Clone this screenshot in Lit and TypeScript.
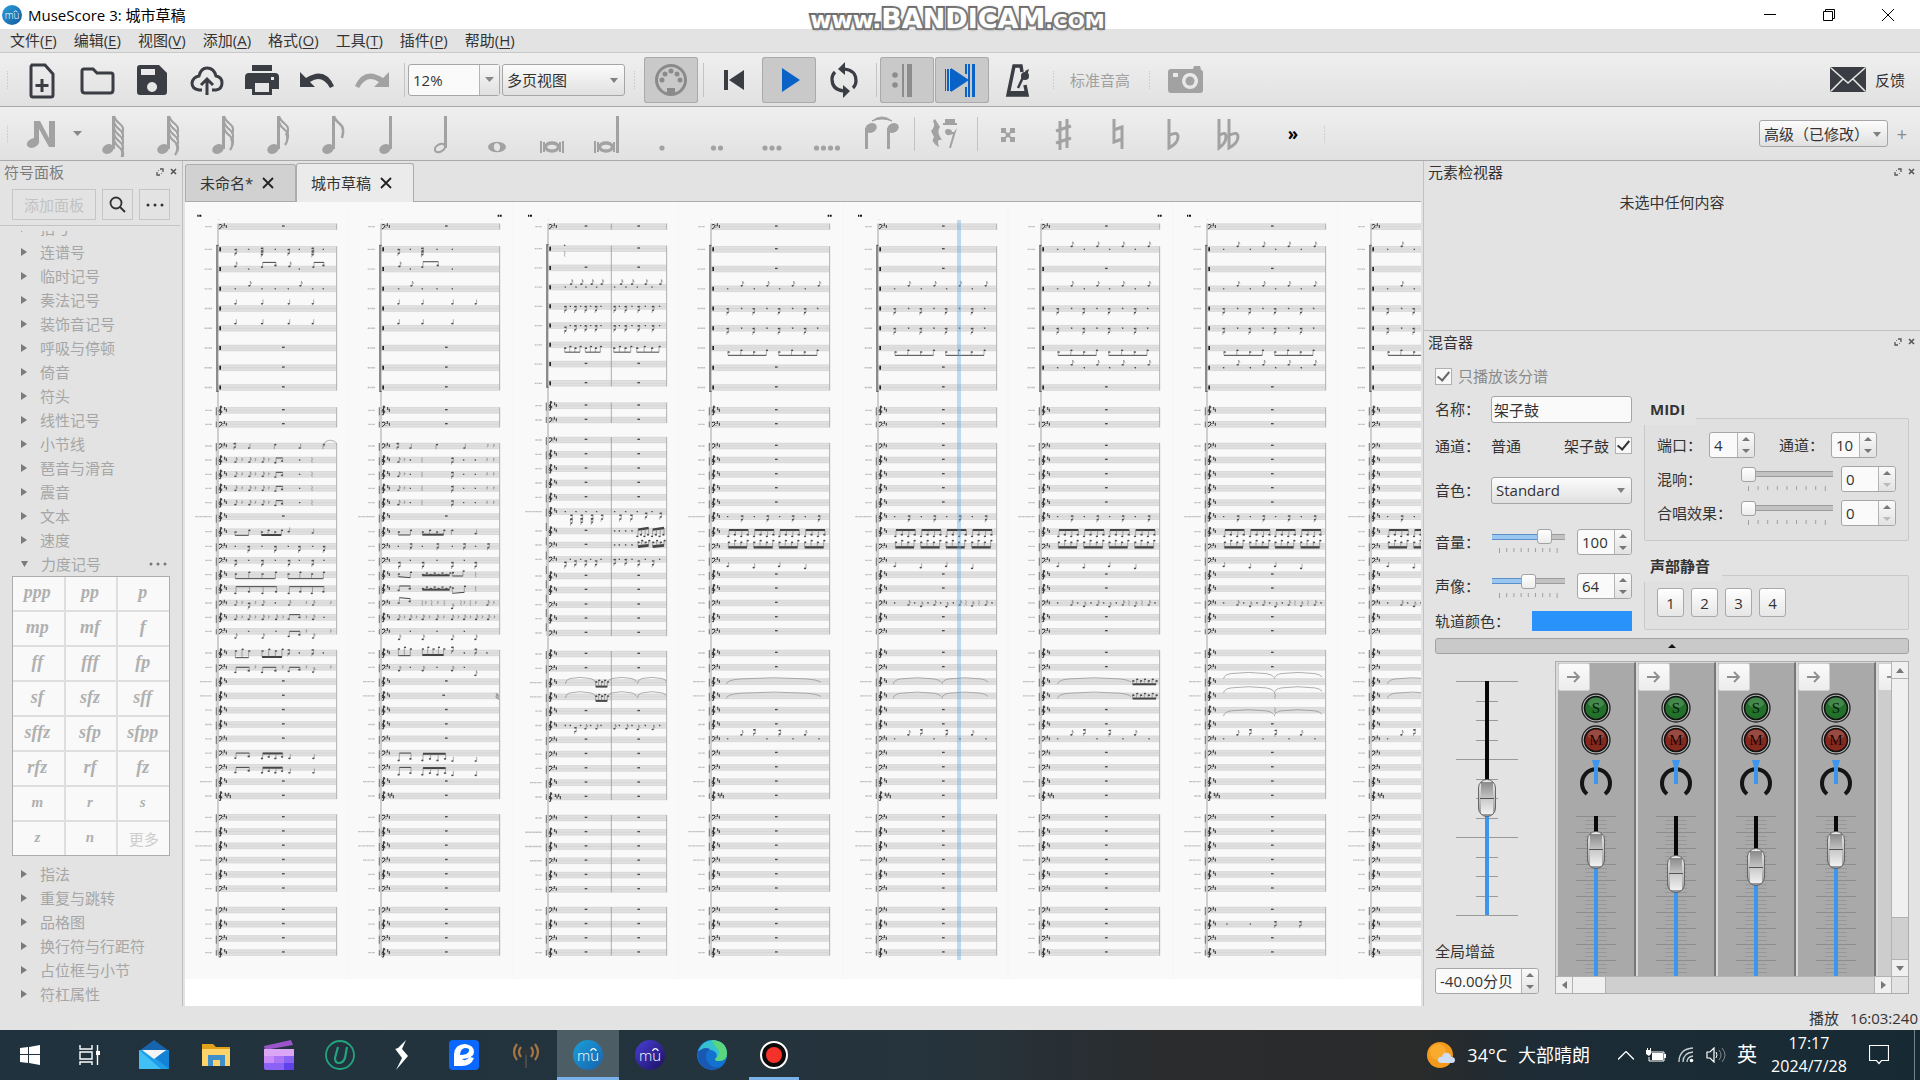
import { LitElement, html, svg, css } from "lit";
import { customElement, property } from "lit/decorators.js";

const DARK = "#3b3d44";
const GREY = "#a2a2a2";
const BLUE = "#0b62c6";

const icon = (w: number, h: number, body: unknown) =>
  html`<svg width=${w} height=${h} viewBox="0 0 ${w} ${h}" aria-hidden="true">${body}</svg>`;

/* ---------- toolbar icons, all on a 54 x 46 field ---------- */
const fileIcons: [string, unknown][] = [
  ["新建", svg`<path d="M16 8h14l8 9v21q0 2-2 2H18q-2 0-2-2V10q0-2 2-2" fill="none" stroke=${DARK} stroke-width="3"/><path d="M27 22v13M20.500 28.500h13" stroke=${DARK} stroke-width="3"/>`],
  ["打开", svg`<path d="M12 33V14q0-2 2-2h9l4 4h14q2 0 2 2v15q0 3-3 3H15q-3 0-3-3z" fill="none" stroke=${DARK} stroke-width="3"/>`],
  ["保存", svg`<path fill-rule="evenodd" d="M15 8h19l8 8v19q0 3-3 3H15q-3 0-3-3V11q0-3 3-3zm1 4v6h14v-6zM27 25a5 5 0 1 0 .1 0z" fill=${DARK}/>`],
  ["云端保存", svg`<path d="M22 33h-3q-7-1-7-7 1-6 7-7 2-8 8-8 7 0 9 8 6 1 6 7 0 6-6 7h-4M27 38V23M21 28l6-6 6 6" fill="none" stroke=${DARK} stroke-width="3"/>`],
  ["打印", svg`<path fill-rule="evenodd" d="M17 8h20v6H17zM14 16h26q4 0 4 4v12h-7v6H17v-6h-7V20q0-4 4-4zm6 10v9h14v-9zm19-6h-3v3h3z" fill=${DARK}/>`],
  ["撤销", svg`<path d="M10 15v15h15l-5-5q12-8 20 6l4-2Q35 9 16 21z" fill=${DARK}/>`],
  ["重做", svg`<path d="M44 15v15H29l5-5q-12-8-20 6l-4-2Q19 9 38 21z" fill=${GREY}/>`],
];

const midiIcon = svg`<circle cx="27" cy="23" r="14.500" fill="none" stroke="#8a8a8a" stroke-width="3"/><g fill="#8a8a8a"><circle cx="18" cy="23" r="2.500"/><circle cx="36" cy="23" r="2.500"/><circle cx="21" cy="17" r="2.500"/><circle cx="33" cy="17" r="2.500"/><circle cx="27" cy="14" r="2.500"/><path d="M23 31h8v6h-8z"/></g>`;
const rewindIcon = svg`<path d="M17 13h4v20h-4zM37 13v20L22 23z" fill=${DARK}/>`;
const playIcon = svg`<path d="M20 11l18 12-18 12z" fill=${BLUE}/>`;
const loopIcon = svg`<g fill="none" stroke=${DARK} stroke-width="3.200"><path d="M27 12q12 1 12 12 0 4-3 7M27 34q-12-1-12-12 0-4 3-7"/></g><path d="M28 5v13l-7-6zM26 41V28l7 6z" fill=${DARK}/>`;
const repeatIcon = svg`<g fill="#8c8c8c"><circle cx="15" cy="18" r="2.800"/><circle cx="15" cy="28" r="2.800"/><path d="M22 7h2v33h-2zM27 7h5v33h-5z"/></g>`;
const panIcon = svg`<path d="M10 12h1v22h-1zM12 12h2v22h-2zM15 12h1v22h-1zM16 11l18 12-18 12zM30 7h2v10h-2zM30 30h2v10h-2zM33 7h2v33h-2zM37 7h3v33h-3z" fill=${BLUE}/>`;
const metroIcon = svg`<path d="M32 15l-1-6h-7l-6 29h19l-2-10" fill="none" stroke=${DARK} stroke-width="3.500"/><path d="M17 34h21v5H17z" fill=${DARK}/><path d="M28 31l7-15" stroke=${DARK} stroke-width="2.500"/><circle cx="35" cy="19" r="4" fill=${DARK}/><path d="M35 14l4-2-2 7z" fill=${DARK}/>`;
const cameraIcon = svg`<path fill-rule="evenodd" d="M12 12h22l1-3h6l1 4q2 0 2 3v17q0 3-3 3H12q-3 0-3-3V15q0-3 3-3zm2 4v4h5v-4zm17 0a8 8 0 1 0 .1 0z" fill=${GREY}/><circle cx="31" cy="24" r="4.500" fill=${GREY}/>`;
const mailIcon = svg`<rect width="36" height="25" rx="2" fill=${DARK}/><path d="M1 1l17 15L35 1M1 24l12-12M35 24L23 12" fill="none" stroke="#e8e8e8" stroke-width="1.600"/>`;

const head = (x: number, y: number) => svg`<ellipse cx=${x} cy=${y} rx="6" ry="4.600" transform="rotate(-25 ${x} ${y})" fill=${GREY}/>`;
const flagged = (n: number) => svg`${head(23, 38)}<path d="M27 5h3v33h-3z" fill=${GREY}/>${Array.from({ length: n }, (_, i) => svg`<path d="M29 ${5 + i * 6}q1 4 6 8 5 4 2 ${n === 1 ? 14 : 10}" fill="none" stroke=${GREY} stroke-width=${n === 1 ? 2.6 : 2.2}/>`)}${n > 1 ? svg`<path d="M36 ${12 + n * 5}q3 7-1 12" fill="none" stroke=${GREY} stroke-width="2.200"/>` : ""}`;
const dots = (n: number) => Array.from({ length: n }, (_, i) => svg`<circle cx=${27 - (n - 1) * 3.5 + i * 7} cy="37" r="2.600" fill=${GREY}/>`);
const breve = svg`<ellipse cx="27" cy="36" rx="6.500" ry="4" fill="none" stroke=${GREY} stroke-width="3.400"/><path d="M16 30v12M19 31v10M35 31v10M38 30v12" stroke=${GREY} stroke-width="2"/>`;
const noteIcons: [string, unknown][] = [
  ["128分", flagged(5)], ["64分", flagged(4)], ["32分", flagged(3)], ["16分", flagged(2)], ["8分", flagged(1)],
  ["4分", svg`${head(25, 38)}<path d="M29 5h3v33h-3z" fill=${GREY}/>`],
  ["2分", svg`<ellipse cx="25" cy="37" rx="5.500" ry="3.600" transform="rotate(-30 25 37)" fill="none" stroke=${GREY} stroke-width="2.200"/><path d="M29 5h3v32h-3z" fill=${GREY}/>`],
  ["全音符", svg`<path fill-rule="evenodd" d="M18 36a9 5.200 0 1 0 18 0 9 5.200 0 1 0-18 0zm6-1a3 3.600 -20 1 1 6 2 3 3.600 -20 1 1-6-2z" fill=${GREY}/>`],
  ["二全音符", breve],
  ["四全音符", svg`<g transform="translate(-1 0)">${breve}</g><path d="M36 5h3v37h-3z" fill=${GREY}/>`],
  ["附点", dots(1)], ["双附点", dots(2)], ["三附点", dots(3)], ["四附点", dots(4)],
  ["延音线", svg`<path d="M17 10q10-8 20 0-10-4-20 0z" fill=${GREY} stroke=${GREY}/>${head(16, 17)}${head(38, 17)}<path d="M10 17h3v21h-3zM32 17h3v21h-3z" fill=${GREY}/>`],
];
const restIcon = svg`<path d="M17 8l5 8q-4 5 2 13-6-2-3 7-9-5-5-10l-3-6q5-5 2-10z" fill=${GREY}/><path d="M27 8h10v4h2v2H25v-2h2zM36 21l3-4-6 20h-2l4-14q-7 3-8-2 0-3 3-3 4 0 4 3z" fill=${GREY}/>`;
const accIcons: [string, unknown][] = [
  ["重升", svg`<path d="M20 17h5v4l2 1 2-1v-4h5v5h-4l-1 2 1 2h4v5h-5v-4l-2-1-2 1v4h-5v-5h4l1-2-1-2h-4z" fill=${GREY}/>`],
  ["升", svg`<path d="M24 10v29M31 8v29M20 20l15-5M20 32l15-5" stroke=${GREY} stroke-width="3" fill="none"/>`],
  ["还原", svg`<path d="M23 8v23l8-3M31 38V16l-8 3" stroke=${GREY} stroke-width="3" fill="none"/>`],
  ["降", svg`<path d="M23 8v29q9-5 9-11 0-6-8-2" stroke=${GREY} stroke-width="3" fill="none"/>`],
  ["重降", svg`<path d="M18 8v29q7-5 7-11 0-6-6-2M28 8v29q9-5 9-11 0-6-8-2" stroke=${GREY} stroke-width="3" fill="none"/>`],
];

/* ---------- score drawing: thirds of a pixel inside each page ---------- */
const run = (from: number, step: number, n: number) => Array.from({ length: n }, (_, i) => from + step * i);
const STD_Y = [680, ...run(748, 59.2, 8), 1231, 1273, 1338, 1380, 1423, 1465, 1508, 1550, 1595, 1639, 1681, 1724, 1766, 1809, 1852, 1894, ...run(1959, 42.9, 11), ...run(2452, 42.8, 6), ...run(2730, 42.6, 4)];
const MID_Y = [680, ...run(746, 57.7, 8), 1217, 1260, 1320, 1363, 1406, 1449, 1492, 1535, 1593, 1635, 1678, 1728, 1770, 1814, 1856, 1899, ...run(1962, 42.9, 11), ...run(2454, 42.8, 6), ...run(2730, 42.6, 4)];
const GROUPS = [[0, 0], [1, 8], [9, 10], [11, 24], [25, 35], [36, 41], [42, 45]];
const BASS = new Set([0, 10, 11, 18, 19, 22, 24, 26, 31, 32, 33, 36, 39, 41, 42, 44]);

const glyph = (tok: string, y: number) => {
  const a = tok.slice(1).split(",").map(Number);
  const [x] = a;
  const dy = a[1] ?? 0;
  const c = y + dy;
  switch (tok[0]) {
    case "r": return svg`<path d="M${x - 3} ${c - 2}h5v4h-3z"/>`;
    case "w": return svg`<path d="M${x - 4} ${c - 4}h8v4h-8z"/>`;
    case "z": return svg`<path d="M${x - 2} ${c - 4}h4l-3 8" class="st"/>`;
    case "k": return svg`<path d="M${x - 1} ${c - 8}l2 6-2 4 2 6" class="st"/>`;
    case "q": return svg`<ellipse cx=${x} cy=${c + 6} rx="3.500" ry="2.500"/><path d="M${x + 3} ${c + 6}v-13" class="st"/>`;
    case "d": return svg`<ellipse cx=${x} cy=${c - 4} rx="3.500" ry="2.500"/><path d="M${x - 3} ${c - 4}v14" class="st"/>`;
    case "e": return svg`<ellipse cx=${x - 1} cy=${c + 6} rx="3.500" ry="2.500"/><path d="M${x + 2} ${c + 6}v-14l4 8" class="st"/>`;
    case "f": return svg`<ellipse cx=${x} cy=${c + 1} rx="4" ry="2.500"/><ellipse cx=${x} cy=${c + 12} rx="3.500" ry="2.500"/><path d="M${x - 3} ${c + 20}l1-6 5-4v-12" class="st"/>`;
    case "s": {
      const w = a[1] - x;
      return svg`<path d="M${x} ${y + a[2] + 6}q1-13 ${w * 0.15}-16 ${w * 0.35}-7 ${w * 0.7} 0 ${w * 0.12} 3 ${w * 0.15} 10" class="sl"/>`;
    }
    case "b": {
      const [x1, x2, by, hy, n, t] = a;
      const tilt = a[6] ?? 0;
      return svg`<path d="M${x1} ${y + by}L${x2} ${y + by - tilt}" stroke="#444" stroke-width=${t}/>${run(0, 1, n).map((i) => {
        const px = x1 + ((x2 - x1) * i) / (n - 1);
        return svg`<ellipse cx=${px - (hy > by ? 2 : -2)} cy=${y + hy + (i % 2 ? -3 : 2)} rx="3.500" ry="2.600"/><path d="M${px} ${y + hy}V${y + by - (tilt * i) / (n - 1)}" class="st"/>`;
      })}`;
    }
  }
  return "";
};

const offbeat = "r50 e93,-15 r130 e170,-15 r206 e246,-15 r283 e324,-15";
const onbeat = "f50 r92 f128 r168 f204 r245 f282 r320";
const zig = "b51,166,22,10,4,3 b203,318,22,10,4,3";
const denseUp = "b54,112,-5,12,4,6 b131,189,-5,12,4,6 b207,265,-5,12,4,6 b284,342,-5,12,4,6";
const denseDown = "b52,108,3,-14,4,7 b128,185,3,-14,4,7 b204,260,3,-14,4,7 b281,338,3,-14,4,7";
const walk = "r50 e92 r110 e130,4 r150 e170 r188 e206,5 r226 e246 k264 e283,3 k303 e324 r342";
const base: Record<number, string> = {
  3: offbeat, 4: onbeat, 5: onbeat, 6: zig,
  16: "r50 f93,-3 r130 f170,-3 r206 f246,-3 r283 f324,-3", 17: denseUp, 18: denseDown,
  19: "q50,12 q128,16 q204,12 q282,18", 31: "r50 e92,-18 f130,-28 r168 f206,-26 r246 e283,-18 r324",
};
const fig = "e53 z72 e95 z112 e135 z152 b174,194,-6,6,2,3 r245 k282";
const fig2 = "e53 z70 r88 k123 f214,-6 r248 r283 z318 z338";
const PAGES: { x: number; left: number; numX: number; notes: Record<number, string>; mid?: boolean }[] = [
  { x: 0, left: 33, numX: -62, notes: {
    1: "f53 r92 f132,-4 f132,4 r172 f212 r244 f284,-4 f284,4 r316", 2: "e53,-14 r92 b134,174,-20,-8,2,3 e215,-14 r244 b288,318,-20,-8,2,3",
    3: "r52 e95,-15 r132 r172 r211 e248,-15 r284 r316", 4: "q52,-20 q132,-20 q212,-20 q284,-20", 5: "q52,-20 q132,-20 q212,-20 q284,-20",
    11: "f50,-8 q93 d172 q245 d318 s318,356,-4", 12: fig, 13: fig, 14: fig, 15: fig,
    17: "b51,92,11,-1,2,3 b130,190,10,-1,4,6 q212,-6 q284,-2", 18: "r52 f92 r132 f172 r211 f244 r284 f318", 19: "f53 r92 f133 r172 f213 r244 f284 r318",
    20: "b52,172,12,-4,4,3 b210,316,12,-4,4,3", 21: "b54,176,-6,12,4,3 b214,318,-6,12,4,3", 22: "e53 z72 f93 z112 e135 r172 e214 z265 e286 z338",
    23: "e53 z72 e93 z112 e135 z152 e175 z195 b214,246,-8,3,2,3 z265 e286 r318", 24: "e53,14 r92 e135,14 r174 b214,246,0,13,2,3 z265 e286,14 z338",
    25: "b52,92,14,-8,3,3 b132,192,12,-8,4,6 f212,-10 r244 f284,-10 r316", 26: "b54,94,0,13,2,3 z112 b134,174,0,13,2,3 z194 b214,246,0,10,2,3 z265 e286,8 z338",
    32: "b54,94,0,13,2,3 b134,194,1,14,4,6 q214,10 q286,10", 33: "b54,94,0,13,2,3 b134,194,1,14,4,6 q214,10 q286,10" } },
  { x: 164, left: 196, numX: 350, notes: {
    1: "f53 r88 f124,-4 f124,4 r168 r214", 2: "e56,-14 r88 b126,172,-22,-8,2,3 r214", 3: "r53 e92,-15 r124 r168 r214", 4: "q52,-20 q124,-20 q214,-20 q284,-20", 5: "q52,-20 q124,-20 q214,-20",
    11: "f50,-8 q88 d168 q250 z320 z338", 12: fig2, 13: fig2, 14: fig2, 15: fig2,
    17: "b52,88,10,-1,2,3 b124,188,9,-1,4,6 d214 q284", 18: "r52 f90,-8 r124 f170,-8 r214 f250,-8 r284 f322,-8", 19: "f55,6 r88 f126,6 r168 f214,6 r250 f284,6",
    20: "b52,88,6,-4,2,3,-3 b124,206,2,-2,8,6 b214,246,4,-8,2,3 k284", 21: "b55,88,-8,3,2,3 b124,206,3,-2,8,6 b214,250,14,-4,2,3,3 k284",
    22: "b55,88,-16,-2,2,3,-3 k124 z134 k152 z170 k190 e214,10 k240 z250 k268 z284 e320 z338", 23: "e53 z70 e88 z106 e126 z145 e168 z188 e214 z232 e250 z268 e286 z304 e322 z340",
    24: "e55,18 r88 e126,18 r168 e214,18 r250 e284,18", 25: "b52,88,8,-14,3,3 b124,188,6,-14,5,6 f214,-18 r250 f284,-12 r318", 26: "e55,4 r88 e126,4 r168 e214,4 r250 e284,18",
    28: "w188 k346 k349 k352,4", 32: "b55,90,0,20,2,3 b126,194,2,20,4,6 q214,18 q284,18", 33: "b55,90,0,20,2,3 b126,194,2,20,4,6 q214,18 q284,18" } },
  { x: 329, left: 363, numX: -60, mid: true, notes: {
    1: "r50,-10 k50,16 w272", 3: "r52 e70,-15 r84 e101,-15 r114 e132,-15 r146 e162,-15 r200 e220,-15 r234 e253,-15 r268 e294,-15 r312 e338,-15",
    4: "f52 r67 f82 r98 f113 r128 f144 r159 f200 r214 f233 r252 f272 r292 f315 r335", 5: "f52,4 r67 f82 r98 f113 r128 f144 r159 f200 r214 f233 r252 f272 r292 f315 r335",
    6: "b50,96,22,8,4,3 b112,157,22,8,4,3 b197,248,22,8,4,3 b266,333,22,8,4,3",
    16: "r52 f70,10 f70,22 r84 f101,10 f101,20 r114 f132,10 f132,20 r146 f162,10 r200 f217,10 r233 f250,10 r268 f294,4 r312 f338,4",
    17: "w114 r200 r214 r233 r252 b270,302,-4,14,4,7,5 b314,348,-4,14,4,7,5", 18: "w114 r200 r214 r233 r252 b270,302,5,-10,4,8,4 b314,348,5,-10,4,8,4",
    19: "f52,8 r67 f82,4 r98 f113,4 r128 f144,4 r159 f200 r214 f233 r252 f272,4 r292 f315,4 r335",
    27: "s52,142,-2 b143,178,12,-4,5,6 s178,265,-2 s268,356,-2", 28: "s52,142,-2 b143,178,12,-4,5,6 s178,265,-2 s268,356,-2",
    30: "r52 r67 f82,6 r98 e113,4 r128 e146,4 r159 e200,4 r214 e236,4 r252 e270,6 r292 e315,6 r335" } },
  { x: 494, left: 526, numX: 350, notes: { ...base, 27: "s46,330,2", 28: "s46,330,2" } },
  { x: 659, left: 693, numX: -60, notes: { ...base, 22: walk, 27: "s46,190,2 s192,330,2", 28: "s46,190,2 s192,330,2" } },
  { x: 824, left: 856, numX: 350, notes: { ...base, 1: offbeat, 7: offbeat, 22: walk, 27: "s50,270,2 b275,345,8,-4,7,6", 28: "s50,270,2 b275,345,8,-4,7,6" } },
  { x: 989, left: 1022, numX: -60, notes: { ...base, 1: offbeat, 7: offbeat, 22: walk, 27: "s50,200,-14 s202,345,-14", 28: "s50,200,-14 s202,345,-14 k204", 29: "s50,200,12 s202,345,12 k204", 43: "f205,-8 f280,-8 r60 r130" } },
  { x: 1154, left: 1186, numX: 350, notes: { ...base, 1: offbeat, 22: walk, 27: "s50,200,2", 28: "s50,200,2" } },
];

const drawPage = (p: (typeof PAGES)[number]) => {
  const Y = p.mid ? MID_Y : STD_Y;
  return svg`
  <rect x=${p.x} y="0" width="163" height="777" fill="#f9f9f9"/><path d="M${p.x + 164} 0v777" stroke="#efefef"/>
  <g transform="translate(${p.left} -202) scale(.33333)" fill="#4a4a4a">
    <path d="M${p.numX} 644h4v6h-4zM${p.numX + 6} 644h6v6h-6z" fill="#111"/>
    <path d="M-1 659h6" stroke="#bbb"/>
    ${Y.map((y, i) => {
      const len = i > 0 && i < 9 ? 22 : [16, 37, 38].includes(i) ? 50 : [27, 28, 34, 39].includes(i) ? 36 : 20;
      const sharp = i === 35 ? svg`<path d="M22-10v10M27-5v10M32-10v10M37-3v10" class="ky" transform="translate(0 ${y})"/>` : svg`<path d="M${BASS.has(i) ? 19 : 20}-10v9M25-5v9" class="ky" transform="translate(0 ${y})"/>`;
      return svg`
      <rect x="0" y=${y - 9} width="356" height="18" fill="#e0e0e0"/>
      <path d="M0 ${y - 8.5}h356M0 ${y}h356M0 ${y + 8.5}h356" stroke="#cccccc" stroke-width="1.500"/>
      <path d="M${-18 - len} ${y}h${len}" stroke="#bcbcbc" stroke-width="4" stroke-dasharray="5 1 3 1 2 1"/>
      ${i > 0 && i < 9 ? svg`<path d="M4 ${y - 6}h5v12h-5z" fill="#222"/>` : svg`
        <path d=${BASS.has(i) ? "M3-5q8-5 9 2-1 7-9 10M15-4v2M15 2v2" : "M8 13q-5 2-5-2M8 13L7-13q6-1 4 5-8 5-8 11 2 6 8 3 2-5-3-5"} class="cl" transform="translate(0 ${y})"/>${sharp}`}
      ${(p.notes[i] ?? (p.mid ? "w114 w272" : "w196")).split(" ").map((t) => glyph(t, y))}`;
    })}
    <path d="M0 ${Y[0] - 9}V${Y[45] + 9}" stroke="#a4a4a4" stroke-width="3"/>
    ${GROUPS.map(([a, b], gi) => svg`
      <path d="M356 ${Y[a] - 9}V${Y[b] + 9}" stroke="#b0b0b0" stroke-width="3"/>
      ${p.mid ? svg`<path d="M190 ${Y[a] - 9}V${Y[b] + 9}" stroke="#8a8a8a" stroke-width="2"/>` : ""}
      ${gi === 1 ? svg`<path d="M-3 ${Y[a] - 12}V${Y[b] + 12}" stroke="#8c8c8c" stroke-width="6"/><path d="M-5 ${Y[a] - 12}h7M-5 ${Y[b] + 12}h7" stroke="#333" stroke-width="2"/>`
        : gi > 1 ? svg`<path d="M-5 ${Y[a] - 9}V${Y[b] + 9}" stroke="#555" stroke-width="3" stroke-dasharray="24 19"/><path d="M-5 ${Y[a] - 9}V${Y[b] + 9}" stroke="#999" stroke-width="1.500"/>` : ""}`)}
  </g>`;
};

@customElement("score-canvas")
class ScoreCanvas extends LitElement {
  static styles = css`
    :host { display: block; overflow: hidden; background: #fff; min-width: 0; min-height: 0; }
    svg { display: block; width: 100%; height: 100%; }
    .st { fill: none; stroke: #666; stroke-width: 1.6; }
    .sl { fill: none; stroke: #8a8a8a; stroke-width: 2; }
    .cl { fill: none; stroke: #333; stroke-width: 3; }
    .ky { fill: none; stroke: #444; stroke-width: 3.4; }
  `;
  render() {
    return html`<svg role="img" aria-label="城市草稿">${PAGES.map(drawPage)}
      <rect x="772" y="18" width="4" height="740" fill="#5aa5dc" opacity=".38"/></svg>`;
  }
}

/* ---------- spin box ---------- */
@customElement("spin-box")
class SpinBox extends LitElement {
  @property() value = "";
  @property() label = "";
  @property({ type: Boolean }) floor = false;
  static styles = css`
    :host { display: flex; height: 26px; border: 1px solid #a6a6a6; border-radius: 3px; background: #fafafa; box-sizing: border-box; }
    input { flex: 1; min-width: 0; border: 0; padding: 0 0 0 4px; background: none; outline: none; color: #333; font: 15px/24px "Open Sans", "Noto Sans CJK SC", sans-serif; }
    .arrows { display: grid; width: 16px; border-left: 1px solid #b4b4b4; background: linear-gradient(#fafafa, #e2e2e2); border-radius: 0 3px 3px 0; }
    button { border: 0; padding: 0; background: none; display: grid; place-items: center; }
    .low { opacity: .4; }
    svg { display: block; }
  `;
  render() {
    return html`<input aria-label=${this.label} .value=${this.value} />
      <span class="arrows">
        <button aria-label="增加">${icon(8, 4, svg`<path d="M0 4l4-4 4 4z" fill="#777"/>`)}</button>
        <button aria-label="减少" class=${this.floor ? "low" : ""}>${icon(8, 4, svg`<path d="M0 0l4 4 4-4z" fill="#777"/>`)}</button>
      </span>`;
  }
}

const controls = css`
  * { box-sizing: border-box; }
  button, input, select { font: inherit; color: inherit; margin: 0; }
  button { padding: 0; border: 0; background: none; }
  svg { display: block; flex: none; }
  .pick { position: relative; display: flex; }
  .pick select { appearance: none; width: 100%; border: 1px solid #a6a6a6; border-radius: 3px; padding: 0 20px 0 4px; background: linear-gradient(#fcfcfc, #e0e0e0); outline: none; }
  .pick::after { content: ""; position: absolute; right: 7px; top: 50%; margin-top: -2px; border: 4px solid transparent; border-top: 5px solid #808080; border-bottom: 0; pointer-events: none; }
  .dock-title { display: flex; align-items: center; height: 22px; padding: 0 1px 0 4px; }
  .dock-title h2 { flex: 1; margin: 0; font-size: 15px; font-weight: 400; }
  .dock-title button { width: 14px; height: 18px; display: grid; place-items: center; }
`;
const dockTitle = (name: string) => html`<header class="dock-title"><h2>${name}</h2>
  <button aria-label="浮动">${icon(8, 8, svg`<path d="M4 1h3v3M1 4v3h3" fill="none" stroke="#555" stroke-width="1.300"/><path d="M2 3l1-1M5 6l1-1" stroke="#777"/>`)}</button>
  <button aria-label="关闭">${icon(8, 8, svg`<path d="M1 1l5 5M6 1L1 6" stroke="#555" stroke-width="1.600"/>`)}</button></header>`;

/* ---------- palettes ---------- */
const ABOVE = ["连谱号", "临时记号", "奏法记号", "装饰音记号", "呼吸与停顿", "倚音", "符头", "线性记号", "小节线", "琶音与滑音", "震音", "文本", "速度"];
const BELOW = ["指法", "重复与跳转", "品格图", "换行符与行距符", "占位框与小节", "符杠属性"];
const DYNAMICS = ["ppp", "pp", "p", "mp", "mf", "f", "ff", "fff", "fp", "sf", "sfz", "sff", "sffz", "sfp", "sfpp", "rfz", "rf", "fz", "m", "r", "s", "z", "n"];

@customElement("palette-dock")
class PaletteDock extends LitElement {
  static styles = [controls, css`
    :host { display: flex; flex-direction: column; border-right: 1px solid #bdbdbd; color: #7c7c7c; overflow: hidden; }
    .bar { display: grid; grid-template-columns: 84px 31px 31px; gap: 6px; padding: 6px 12px 5px; border-bottom: 1px solid #c4c4c4; margin: 0 2px 0 0; }
    .bar button { height: 31px; border: 1px solid #c6c6c6; display: grid; place-items: center; color: #c2c2c2; }
    .list { flex: 1; overflow: hidden; margin-top: 5px; }
    .cut { margin-top: -15px; }
    .row { display: flex; align-items: center; width: 100%; height: 24px; padding-left: 21px; color: #a6a6a6; text-align: left; }
    .row span { flex: 1; padding-left: 13px; }
    .row .more { margin-right: 15px; }
    .cells { display: grid; grid-template-columns: repeat(3, 1fr); gap: 2px; width: 158px; margin: 0 0 6px 12px; background: #dedede; border: 1px solid #adadad; }
    .cells button { height: 33px; background: #f9f9f9; color: #b0b0b0; font: italic 700 18px/30px "Liberation Serif", serif; padding: 0 2px 3px 0; }
    .cells .small { font-size: 15px; }
    .cells .rest { font: 15px "Noto Sans CJK SC", sans-serif; color: #cdcdcd; padding: 0; }
  `];
  row(name: string) {
    return html`<button class="row">${icon(6, 8, svg`<path d="M0 0l6 4-6 4z" fill="#7b7b7b"/>`)}<span>${name}</span></button>`;
  }
  render() {
    const ell = (c: string) => icon(18, 4, svg`<g fill=${c}><circle cx="2" cy="2" r="1.500"/><circle cx="9" cy="2" r="1.500"/><circle cx="16" cy="2" r="1.500"/></g>`);
    return html`${dockTitle("符号面板")}
      <div class="bar"><button>添加面板</button>
        <button aria-label="搜索">${icon(17, 17, svg`<circle cx="7" cy="7" r="5.500" fill="none" stroke="#333" stroke-width="1.800"/><path d="M11 11l5 5" stroke="#333" stroke-width="2"/>`)}</button>
        <button aria-label="更多选项">${ell("#333")}</button></div>
      <div class="list"><div class="cut">${this.row("拍号")}</div>
        ${ABOVE.map((n) => this.row(n))}
        <button class="row">${icon(7, 8, svg`<path d="M0 1h7l-3.500 6z" fill="#7b7b7b"/>`)}<span>力度记号</span><i class="more">${ell("#777")}</i></button>
        <div class="cells">${DYNAMICS.map((d) => html`<button class=${/^[mrszn]$/.test(d) ? "small" : ""}>${d}</button>`)}<button class="rest">更多</button></div>
        ${BELOW.map((n) => this.row(n))}</div>`;
  }
}

/* ---------- mixer ---------- */
const ticks = (w: number, n: number, step: number) => icon(w, 5, run(0, 1, n).map((i) => svg`<path d="M${7.5 + i * step} 0v${i === 0 || i === n - 1 ? 5 : 4}" stroke="#a0a0a0"/>`));

@customElement("mixer-dock")
class MixerDock extends LitElement {
  static styles = [controls, css`
    :host { display: flex; flex-direction: column; border-top: 1px solid #c2c2c2; padding-bottom: 12px; min-height: 0; }
    .dock-title { height: 22px; }
    .only { display: flex; align-items: center; gap: 6px; height: 36px; padding: 10px 0 0 11px; color: #8a8a8a; }
    input[type="checkbox"] { appearance: none; width: 17px; height: 17px; border: 1px solid #b0b0b0; background: #f8f8f8; display: grid; place-items: center; }
    input[type="checkbox"]:checked::after { content: ""; width: 5px; height: 10px; border: solid #333; border-width: 0 2px 2px 0; transform: rotate(40deg); margin-top: -3px; }
    .only input[type="checkbox"]:checked::after { border-color: #666; }
    .form { display: grid; grid-template-columns: 197px 1fr; gap: 12px; padding: 0 11px; }
    .line { display: grid; grid-template-columns: 56px 1fr auto; align-items: center; height: 42px; }
    .name { height: 40px; } .chan { height: 33px; } .sound { height: 56px; } .vol { height: 47px; } .hue { height: 28px; grid-template-columns: 1fr 100px; }
    .name input { grid-column: 2 / 4; width: 100%; height: 27px; border: 1px solid #a6a6a6; border-radius: 3px; background: #fafafa; padding: 0 2px; outline: none; }
    .chan .drum { display: flex; align-items: center; gap: 6px; }
    .sound .pick { grid-column: 2 / 4; height: 27px; }
    .swatch { height: 20px; background: #2a93fb; }
    .w46 { width: 46px; } .w55 { width: 55px; }
    .slide { display: grid; justify-items: start; gap: 4px; padding: 0 0 1px 1px; }
    .slide input { width: 73px; }
    .midi .slide input { width: 92px; }
    input[type="range"] { appearance: none; background: none; margin: 0; display: block; height: 15px; outline: none; }
    .slide input::-webkit-slider-runnable-track { height: 15px; background: linear-gradient(90deg, #9ac6f2 var(--p), #c2c2c2 var(--p)) center / 100% 4px no-repeat, linear-gradient(90deg, #5b8fc6 var(--p), #9c9c9c var(--p)) center / 100% 6px no-repeat; }
    .slide input::-webkit-slider-thumb { appearance: none; width: 15px; height: 15px; border: 1px solid #a2a2a2; border-radius: 3px; background: linear-gradient(#fff, #ececec); }
    .side { padding-top: 4px; }
    h3 { position: relative; display: flex; align-items: center; width: 52px; height: 32px; margin: 0 0 -7px; padding-left: 6px; font-size: 15px; background: #e3e3e3; }
    .mute-title { width: 78px; margin-top: 9px; }
    .box { border: 1px solid #c9c9c9; border-radius: 2px; background: #e0e0e0; }
    .midi { padding: 9px 12px 10px; }
    .mrow { display: flex; align-items: center; height: 34px; }
    .mrow label, .mrow .cap { width: 52px; }
    .mrow .gapped { margin-left: 24px; }
    .mrow .cap { flex: 1; white-space: nowrap; }
    .mrow .slide + spin-box { margin-left: 8px; }
    .voices { display: flex; gap: 7px; padding: 12px; height: 55px; }
    .voices button { width: 27px; height: 29px; border: 1px solid #a9a9a9; border-radius: 3px; background: linear-gradient(#fff, #e6e6e6); }
    .fold { margin: 3px 11px 7px; height: 16px; border: 1px solid #a2a2a2; border-radius: 3px; background: #c9c9c9; display: grid; place-items: center; flex: none; }
    .desk { flex: 1; display: grid; grid-template-columns: 104px 1fr; gap: 16px; padding: 0 11px; min-height: 0; }
    .gain { display: flex; flex-direction: column; padding-top: 20px; }
    .gain p { margin: auto 0 6px; line-height: 22px; }
    .fader { display: grid; justify-items: center; flex: none; }
    .fader > * { grid-area: 1 / 1; }
    .fader input { writing-mode: vertical-lr; direction: rtl; width: 18px; height: 234px; }
    .fader input::-webkit-slider-runnable-track { width: 18px; height: 100%; background: linear-gradient(#080808 var(--p), #3d95ee var(--p)) center / 4px 100% no-repeat; }
    .fader input::-webkit-slider-thumb { appearance: none; width: 18px; height: 38px; border: 1px solid #666; border-radius: 9px; background: linear-gradient(#555, #555) center / 14px 1px no-repeat, linear-gradient(#8a8a8a, #c4c4c4 50%, #c8c8c8 50%, #f0f0f0) center / 12px 32px no-repeat, linear-gradient(#ececec, #989898); }
    .rack { display: grid; grid-template-columns: minmax(0, 1fr) 17px; grid-template-rows: minmax(0, 1fr) 17px; border: 1px solid #adadad; min-height: 0; }
    .strips { display: flex; overflow: hidden; }
    .strip { flex: none; width: 80px; border: solid; border-width: 1px 2px 0; border-color: #d9d9d9 #777 #d9d9d9 #d9d9d9; background: #a9a9a9; display: flex; flex-direction: column; align-items: center; }
    .strip:last-child { background: #cdcdcd; }
    .go { flex: none; align-self: flex-start; width: 32px; height: 28px; border: 1px solid #cfcfcf; border-radius: 2px; background: linear-gradient(#fbfbfb, #ececec); display: grid; place-items: center; }
    .led { flex: none; display: block; margin-top: 2px; width: 30px; height: 30px; }
    .knob { flex: none; margin: 4px 0 19px; }
    .strip .fader { width: 40px; background: repeating-linear-gradient(#8c8c8c 0 1px, transparent 1px 16px) center / 40px 100% no-repeat, repeating-linear-gradient(#989898 0 1px, transparent 1px 4px) center / 22px 100% no-repeat; }
    .strip .fader input { height: 200px; }
    .vbar, .hbar { display: grid; background: #cfcfcf; }
    .vbar { grid-template-rows: 17px 239px 1fr 17px; border-left: 1px solid #b2b2b2; }
    .hbar { grid-template-columns: 17px 33px 1fr 17px; border-top: 1px solid #b2b2b2; }
    .vbar > *, .hbar > * { display: grid; place-items: center; }
    .hbar .grip, .hbar button, .vbar .grip, .vbar button { background: #f0f0f0; border: 0 solid #b2b2b2; }
    .vbar button:first-child, .vbar .grip { border-bottom-width: 1px; } .vbar button:last-child { border-top-width: 1px; }
    .hbar button:first-child, .hbar .grip { border-right-width: 1px; } .hbar button:last-child { border-left-width: 1px; }
    .corner { background: #e3e3e3; border: solid #b2b2b2; border-width: 1px 0 0 1px; }
  `];
  slide(label: string, v: number, wide = false) {
    return html`<span class="slide"><input type="range" aria-label=${label} min="0" max="100" .value=${String(v)} style="--p:${v}%" />${wide ? ticks(92, 9, 9.6) : ticks(73, 9, 7.2)}</span>`;
  }
  led(t: string, c: string, d: string) {
    return html`<button class="led" aria-label=${t === "S" ? "独奏" : "静音"}>${icon(30, 30, svg`<circle cx="15" cy="15" r="14" fill="#b9b9b9" stroke="#222" stroke-width="1.300"/><circle cx="15" cy="15" r="11.500" fill=${c} stroke="#111" stroke-width="1.600"/><ellipse cx="15" cy="10" rx="8" ry="5" fill="#fff" opacity=".16"/><text x="15" y="20" text-anchor="middle" font-family="Liberation Serif" font-size="15" fill=${d}>${t}</text>`)}</button>`;
  }
  strip(v: number, controls = true) {
    return html`<div class="strip"><button class="go" aria-label="展开">${icon(14, 12, svg`<path d="M0 6h12M7 1l5 5-5 5" fill="none" stroke="#8f8f8f" stroke-width="1.800"/>`)}</button>
      ${controls ? html`${this.led("S", "#22702b", "#061a08")}${this.led("M", "#85291f", "#1c0504")}
      <span class="knob">${icon(34, 38, svg`<path d="M8 35a14 14 0 1 1 18 0" fill="none" stroke="#151515" stroke-width="4"/><path d="M13 1h8l-2 7v17h-4V8z" fill="#3d95ee"/>`)}</span>
      <span class="fader"><input type="range" aria-label="音量" min="0" max="100" .value=${String(v)} style="--p:${100 - v}%" /></span>` : ""}</div>`;
  }
  render() {
    return html`${dockTitle("混音器")}
      <label class="only"><input type="checkbox" checked />只播放该分谱</label>
      <div class="form">
        <div>
          <div class="line name"><label for="nm">名称：</label><input id="nm" .value=${"架子鼓"} /></div>
          <div class="line chan"><span>通道：</span><span>普通</span><label class="drum">架子鼓<input type="checkbox" checked /></label></div>
          <div class="line sound"><label for="snd">音色：</label><span class="pick"><select id="snd"><option>Standard</option></select></span></div>
          <div class="line vol"><span>音量：</span>${this.slide("音量", 78)}<spin-box class="w55" label="音量" value="100"></spin-box></div>
          <div class="line"><span>声像：</span>${this.slide("声像", 50)}<spin-box class="w55" label="声像" value="64"></spin-box></div>
          <div class="line hue"><span>轨道颜色：</span><button class="swatch" aria-label="轨道颜色"></button></div>
        </div>
        <div class="side">
          <h3>MIDI</h3>
          <div class="box midi">
            <div class="mrow"><label>端口：</label><spin-box class="w46" label="端口" value="4"></spin-box><label class="gapped">通道：</label><spin-box class="w46" label="通道" value="10"></spin-box></div>
            <div class="mrow"><span class="cap">混响：</span>${this.slide("混响", 0, true)}<spin-box class="w55" label="混响" value="0" floor></spin-box></div>
            <div class="mrow"><span class="cap">合唱效果：</span>${this.slide("合唱效果", 0, true)}<spin-box class="w55" label="合唱效果" value="0" floor></spin-box></div>
          </div>
          <h3 class="mute-title">声部静音</h3>
          <div class="box voices">${[1, 2, 3, 4].map((n) => html`<button>${n}</button>`)}</div>
        </div>
      </div>
      <button class="fold" aria-label="折叠">${icon(8, 4, svg`<path d="M0 4l4-4 4 4z" fill="#111"/>`)}</button>
      <div class="desk">
        <div class="gain">
          <span class="fader">${icon(62, 235, run(0, 1, 13).map((i) => svg`<path d="M${i % 4 ? 20 : 0} ${Math.round(i * 19.5) + 0.5}h${i % 4 ? 22 : 62}" stroke="#9a9a9a"/>`))}
            <input type="range" aria-label="全局增益" min="0" max="100" value="50" style="--p:50%" /></span>
          <p>全局增益</p><spin-box label="全局增益" value="-40.00分贝"></spin-box>
        </div>
        <div class="rack">
          <div class="strips">${[91, 76, 80, 91].map((v) => this.strip(v))}${this.strip(0, false)}</div>
          <div class="vbar"><button aria-label="向上">${icon(8, 5, svg`<path d="M0 5l4-5 4 5z" fill="#777"/>`)}</button><span class="grip"></span><span></span><button aria-label="向下">${icon(8, 5, svg`<path d="M0 0l4 5 4-5z" fill="#777"/>`)}</button></div>
          <div class="hbar"><button aria-label="向左">${icon(5, 8, svg`<path d="M5 0L0 4l5 4z" fill="#777"/>`)}</button><span class="grip"></span><span></span><button aria-label="向右">${icon(5, 8, svg`<path d="M0 0l5 4-5 4z" fill="#777"/>`)}</button></div>
          <div class="corner"></div>
        </div>
      </div>`;
  }
}

/* ---------- taskbar ---------- */
const muse = (s: number, c1: string, c2: string, id: string) => icon(s, s, svg`<defs><linearGradient id=${id} x1="0" y1="0" x2="1" y2="1"><stop offset="0" stop-color=${c1}/><stop offset="1" stop-color=${c2}/></linearGradient></defs><circle cx=${s / 2} cy=${s / 2} r=${s / 2} fill="url(#${id})"/><text x=${s / 2} y=${s * 0.7} text-anchor="middle" font-family="Open Sans" font-weight="300" font-size=${s * 0.5} fill="#fff">mu</text><path d="M${s * 0.58} ${s * 0.36}q${s * 0.1} ${-s * 0.14} ${s * 0.2} 0" fill="none" stroke="#fff" stroke-width=${s / 24}/>`);
const tasks: [string, unknown, string?][] = [
  ["邮件", icon(30, 30, svg`<path d="M0 11L15 0l15 11z" fill="#1763ad"/><path d="M0 10h30v19H0z" fill="#1f9de8"/><path d="M0 10l22 19H0z" fill="#40c0f4"/><path d="M30 29L15 17l15-7z" fill="#1382d6"/><path d="M3 10h24L15 19z" fill="#f2f4f6"/>`)],
  ["文件资源管理器", icon(28, 26, svg`<path d="M0 2h11l3 3h14v5H0z" fill="#e0a21b"/><path d="M0 7h28v17H0z" fill="#fdd36a"/><path d="M6 24V13h17v11h-5v-6h-7v6z" fill="#3f8fcb"/>`)],
  ["Clipchamp", icon(31, 30, svg`<path d="M1 6L28 0l2 5L2 10z" fill="#9a55c8"/><rect x="1" y="9" width="30" height="21" rx="2" fill="#8a62f4"/><path d="M1 9h30v7H1z" fill="#dba6f6"/><path d="M1 16h10v7H1z" fill="#c98cf6"/><path d="M11 16h10v7H11z" fill="#ab74f5"/><path d="M21 23h10v7H21z" fill="#5f42ea"/>`)],
  ["IObit Uninstaller", icon(30, 30, svg`<circle cx="15" cy="15" r="14" fill="none" stroke="#22a57f" stroke-width="1.800"/><path d="M13 7l-3 11q0 5 4 5t6-5l2-11" fill="none" stroke="#22a57f" stroke-width="2.200"/>`)],
  ["Studio", icon(16, 30, svg`<path d="M12 0L2 10l6 8-6 12 12-14-6-7z" fill="#fff"/><path d="M1 9l7-2-1 6z" fill="#fff"/>`)],
  ["EasiNote", icon(30, 30, svg`<rect width="30" height="30" rx="4" fill="#0a67ff"/><path d="M5 26V14Q6 4 16 4q9 1 9 8 0 6-12 7 3 3 8-2l4 1q-3 8-12 8z" fill="#fff"/><path d="M11 15q0-6 5-7 5 0 4 3-1 4-9 4z" fill="#0a67ff"/>`)],
  ["广播", icon(30, 28, svg`<g fill="none" stroke="#a77540" stroke-width="2.200"><path d="M6 3q-6 8 0 16M10 6q-4 5 0 10M24 3q6 8 0 16M20 6q4 5 0 10"/></g><path d="M15 9v18" stroke="#4a4a4a" stroke-width="2"/><circle cx="15" cy="11" r="3" fill="#333"/>`)],
  ["MuseScore 3", muse(30, "#1aa0d8", "#1763b0", "ma"), "on"],
  ["MuseScore 4", muse(30, "#4a3fd8", "#1a1060", "mb")],
  ["Edge", icon(30, 30, svg`<circle cx="15" cy="15" r="15" fill="#1372cf"/><path d="M1 11Q6 0 16 0q13 1 14 13 0 8-8 8-4 0-4-2 3-2 1-6-4-6-18-2z" fill="#35c1d0"/><path d="M15 0q14 1 15 13 0 8-8 8-4 0-4-2 8-6 0-13z" fill="#5bd67c"/><path d="M1 12q6-6 12-3-6 4-3 12 4 8 14 6-8 5-16 1Q0 23 1 12z" fill="#1a58b4"/>`)],
  ["Bandicam", icon(28, 28, svg`<circle cx="14" cy="14" r="13" fill="#0a0a0a" stroke="#fff" stroke-width="2"/><circle cx="14" cy="14" r="8" fill="#f5322a"/>`), "open"],
];

@customElement("app-root")
class AppRoot extends LitElement {
  static styles = [controls, css`
    :host { display: grid; grid-template-rows: 29px 24px 54px 54px minmax(0, 1fr) 24px 50px; height: 100vh; overflow: hidden; background: #e3e3e3; color: #333; font: 15px/20px "Open Sans", "Noto Sans CJK SC", sans-serif; }
    .title { position: relative; display: flex; align-items: center; background: #fff; color: #000; padding: 0 3px 0 2px; }
    .title b { flex: 1; font-weight: 400; padding-left: 6px; }
    .title button { width: 59px; height: 29px; display: grid; place-items: center; }
    .mark { position: absolute; z-index: 2; left: 42.2%; top: 3px; margin: 0; line-height: 32px; white-space: nowrap; color: #fff; font-family: "DejaVu Sans", sans-serif; font-weight: 700; font-size: 23px; paint-order: stroke fill; -webkit-text-stroke: 4px #666; text-shadow: 0 2px 2px #888, 0 0 4px #999; }
    .mark strong { font-size: 27px; }
    .mark small { font-size: 20px; text-transform: uppercase; }
    .menu { display: flex; align-items: center; gap: 1px; padding: 0 0 2px 2px; border-bottom: 1px solid #c8c8c8; }
    .menu button { padding: 0 8px; line-height: 20px; }
    u { text-underline-offset: 2px; }
    .tools { display: flex; align-items: center; background: linear-gradient(#efefef, #e1e1e1); border-bottom: 1px solid #a9a9a9; }
    .grip { flex: none; width: 15px; height: 18px; background: radial-gradient(#b4b4b4 1px, transparent 1px) center / 3px 3px; background-clip: content-box; padding: 0 5px; }
    .wide { width: 19px; padding: 0 7px; }
    .set { display: flex; gap: 1px; }
    .set button { width: 54px; height: 46px; border-radius: 3px; }
    .set .down { background: #c9c9c9; box-shadow: inset 0 0 0 1px #aaa; }
    .sep { width: 8px; height: 34px; background: linear-gradient(#c4c4c4, #c4c4c4) center / 1px 100% no-repeat; margin: 0 0 0 1px; }
    .zoom { display: flex; width: 92px; height: 32px; margin-right: 2px; border: 1px solid #a6a6a6; border-radius: 3px; background: #fafafa; }
    .zoom input { flex: 1; min-width: 0; border: 0; background: none; padding: 0 4px; outline: none; }
    .zoom button { width: 20px; border-left: 1px solid #b4b4b4; background: linear-gradient(#f8f8f8, #e0e0e0); display: grid; place-items: center; }
    .view { width: 123px; height: 32px; }
    .off { color: #a0a0a0; }
    .pitch { padding: 0 7px; margin-right: 3px; }
    .push { margin-left: auto; }
    .feedback { display: flex; align-items: center; gap: 9px; margin-right: 15px; }
    .caret { width: 16px; height: 46px; display: grid; place-items: center; }
    .chev { width: 48px; margin-left: 14px; font-size: 17px; color: #000; font-weight: 700; }
    .work { width: 129px; height: 27px; }
    .add { width: 32px; padding-right: 4px; color: #888; font-size: 18px; }
    .body { display: grid; grid-template-columns: 183px minmax(0, 1fr) 497px; min-height: 0; }
    .center { display: grid; grid-template-rows: 41px minmax(0, 1fr); padding: 0 2px; min-width: 0; min-height: 0; }
    .tabs { display: flex; align-items: flex-end; border-bottom: 1px solid #ababab; }
    .tab { display: flex; align-items: center; gap: 9px; width: 111px; height: 37px; padding-left: 14px; border: 1px solid #adadad; border-bottom: 0; border-radius: 3px 3px 0 0; background: #d1d1d1; }
    .cur { width: 118px; height: 39px; background: #ebebeb; margin-bottom: -1px; }
    .right { display: grid; grid-template-rows: 169px minmax(0, 1fr); border-left: 1px solid #c2c2c2; min-height: 0; }
    .none { margin: 0; text-align: center; line-height: 38px; }
    .status { display: flex; justify-content: flex-end; gap: 11px; align-items: center; padding-right: 2px; }
    .task { display: flex; background: linear-gradient(90deg, #20323d, #25343d 48%, #2a2c2e 60%, #2a2b2b 74%, #1d2c36 80%, #172a33); color: #fff; }
    .task button { display: grid; place-items: center; width: 60px; height: 50px; }
    .task .app { width: 62px; }
    .task .on { background: #4d5d66; box-shadow: inset 0 -3px #7ab1e8; }
    .task .open { background: linear-gradient(#7ab1e8, #7ab1e8) center bottom / 50px 3px no-repeat; }
    .first { margin-left: 3px; }
    .task .weather { display: flex; align-items: center; gap: 11px; width: auto; margin-right: 21px; font-size: 18px; }
    .task .tray { width: 30px; }
    .task .ime { width: 32px; font-size: 20px; }
    .clock { width: 92px; margin-right: 10px; text-align: center; font-size: 16px; line-height: 23px; padding-top: 2px; }
    .task .note { width: 50px; border-right: 1px solid #77838a; margin-right: 5px; padding-right: 22px; }
  `];
  render() {
    const menus = [["文件", "F"], ["编辑", "E"], ["视图", "V"], ["添加", "A"], ["格式", "O"], ["工具", "T"], ["插件", "P"], ["帮助", "H"]];
    const btn = (l: string, b: unknown, c = "") => html`<button class=${c} aria-label=${l} title=${l}>${icon(54, 46, b)}</button>`;
    const caret = icon(9, 5, svg`<path d="M0 0h9l-4.500 5z" fill="#888"/>`);
    const cross = icon(12, 12, svg`<path d="M1 1l10 10M11 1L1 11" stroke="#222" stroke-width="1.800"/>`);
    return html`
      <header class="title">${muse(20, "#2aa0dc", "#145a9e", "mt")}<b>MuseScore 3: 城市草稿</b>
        <button aria-label="最小化">${icon(12, 12, svg`<path d="M0 5.500h12" stroke="#000"/>`)}</button>
        <button aria-label="还原">${icon(12, 12, svg`<path d="M.5 2.500h9v9h-9zM2.500 2.500v-2h9v9h-2" fill="none" stroke="#000"/>`)}</button>
        <button aria-label="关闭">${icon(12, 12, svg`<path d="M0 0l12 12M12 0L0 12" stroke="#000"/>`)}</button>
        <p class="mark">www.<strong>BANDICAM</strong><small>.com</small></p></header>
      <nav class="menu">${menus.map(([t, k]) => html`<button>${t}(<u>${k}</u>)</button>`)}</nav>
      <div class="tools"><span class="grip"></span>
        <div class="set">${fileIcons.map(([l, b]) => btn(l, b))}</div><span class="sep"></span>
        <div class="zoom"><input aria-label="缩放" .value=${"12%"} /><button aria-label="缩放列表">${caret}</button></div>
        <span class="pick view"><select aria-label="视图"><option>多页视图</option></select></span>
        <span class="grip wide"></span><div class="set">${btn("MIDI 输入", midiIcon, "down")}</div><span class="sep"></span>
        <div class="set">${btn("回到开头", rewindIcon)}${btn("播放", playIcon, "down")}${btn("循环", loopIcon)}</div><span class="sep"></span>
        <div class="set">${btn("播放反复", repeatIcon, "down")}${btn("跟随乐谱", panIcon, "down")}${btn("节拍器", metroIcon)}</div>
        <span class="grip wide"></span><button class="off pitch">标准音高</button><span class="grip wide"></span>
        <div class="set">${btn("图像截取", cameraIcon)}</div>
        <button class="feedback push">${icon(36, 25, mailIcon)}反馈</button></div>
      <div class="tools"><span class="grip"></span>
        <div class="set">${btn("音符输入", svg`<ellipse cx="18" cy="32" rx="6.500" ry="4.500" transform="rotate(-25 18 32)" fill=${GREY}/><path d="M19 32V10h6l9 17V10h6v26h-6L24 18v14z" fill=${GREY}/>`)}</div>
        <button class="caret" aria-label="输入模式">${caret}</button>
        <div class="set">${noteIcons.map(([l, b]) => btn(l, b))}</div><span class="sep"></span>
        <div class="set">${btn("休止符", restIcon)}</div><span class="sep"></span>
        <div class="set">${accIcons.map(([l, b]) => btn(l, b))}</div>
        <button class="chev">»</button><span class="grip"></span>
        <span class="pick work push"><select aria-label="工作区"><option>高级（已修改）</option></select></span><button class="add">+</button></div>
      <main class="body"><palette-dock></palette-dock>
        <section class="center"><div class="tabs">
          <div class="tab">未命名*<button aria-label="关闭 未命名">${cross}</button></div>
          <div class="tab cur">城市草稿<button aria-label="关闭 城市草稿">${cross}</button></div></div>
          <score-canvas></score-canvas></section>
        <aside class="right"><section>${dockTitle("元素检视器")}<p class="none">未选中任何内容</p></section><mixer-dock></mixer-dock></aside></main>
      <footer class="status"><span>播放</span><span>16:03:240</span></footer>
      <nav class="task">
        <button aria-label="开始">${icon(20, 20, svg`<path d="M0 3l8-1v7H0zM9 2l11-2v9H9zM0 10h8v8l-8-1zM9 10h11v10L9 18z" fill="#fff"/>`)}</button>
        <button aria-label="任务视图">${icon(22, 20, svg`<g fill="none" stroke="#fff" stroke-width="1.400"><path d="M1 0v4h12V0M1 7h12v7H1zM1 20v-3h12v3M18.500 0v20"/></g><path d="M17 6h4v4h-4z" fill="#fff"/>`)}</button>
        <span class="first"></span>
        ${tasks.map(([l, b, c]) => html`<button class="app ${c ?? ""}" aria-label=${l}>${b}</button>`)}
        <button class="weather push">${icon(29, 27, svg`<circle cx="13" cy="13" r="13" fill="#f39a1d"/><circle cx="11" cy="10" r="8" fill="#f9b233" opacity=".7"/><path d="M14 21q-4-1-3-4 1-3 4-2 1-5 6-4 3 1 3 4 4 0 4 3 0 3-3 3z" fill="#cfdcf2"/>`)}<span>34°C</span><span>大部晴朗</span></button>
        <button class="tray" aria-label="隐藏的图标">${icon(16, 9, svg`<path d="M0 8.500l8-8 8 8" fill="none" stroke="#fff" stroke-width="1.300"/>`)}</button>
        <button class="tray" aria-label="电池">${icon(20, 14, svg`<path d="M5 4h13v9H3V9" fill="none" stroke="#fff"/><path d="M6 5h11v7H6zM18 6h2v4h-2zM0 2h5v4l-2 2-3-2zM1 0h1v2H1zM4 0h1v2H4z" fill="#fff"/>`)}</button>
        <button class="tray" aria-label="网络">${icon(16, 16, svg`<g fill="none" stroke="#c9d0d4" stroke-width="1.300"><path d="M1 15Q1 2 15 1M5 15q0-9 10-10M9 15q0-5 6-6"/></g><circle cx="13.500" cy="13.500" r="1.800" fill="#fff"/>`)}</button>
        <button class="tray" aria-label="音量">${icon(20, 16, svg`<path d="M1 5h3l4-4v14l-4-4H1z" fill="none" stroke="#fff" stroke-width="1.200"/><path d="M10 5q2 3 0 6" fill="none" stroke="#fff"/><path d="M13 3q4 5 0 10M16 1q6 7 0 14" fill="none" stroke="#7f8a90"/>`)}</button>
        <button class="ime">英</button>
        <div class="clock">17:17<br />2024/7/28</div>
        <button class="note" aria-label="通知">${icon(20, 20, svg`<path d="M.5.5h19v15h-7l-2.500 3-2.500-3h-7z" fill="none" stroke="#fff" stroke-width="1.200"/>`)}</button>
      </nav>`;
  }
}
